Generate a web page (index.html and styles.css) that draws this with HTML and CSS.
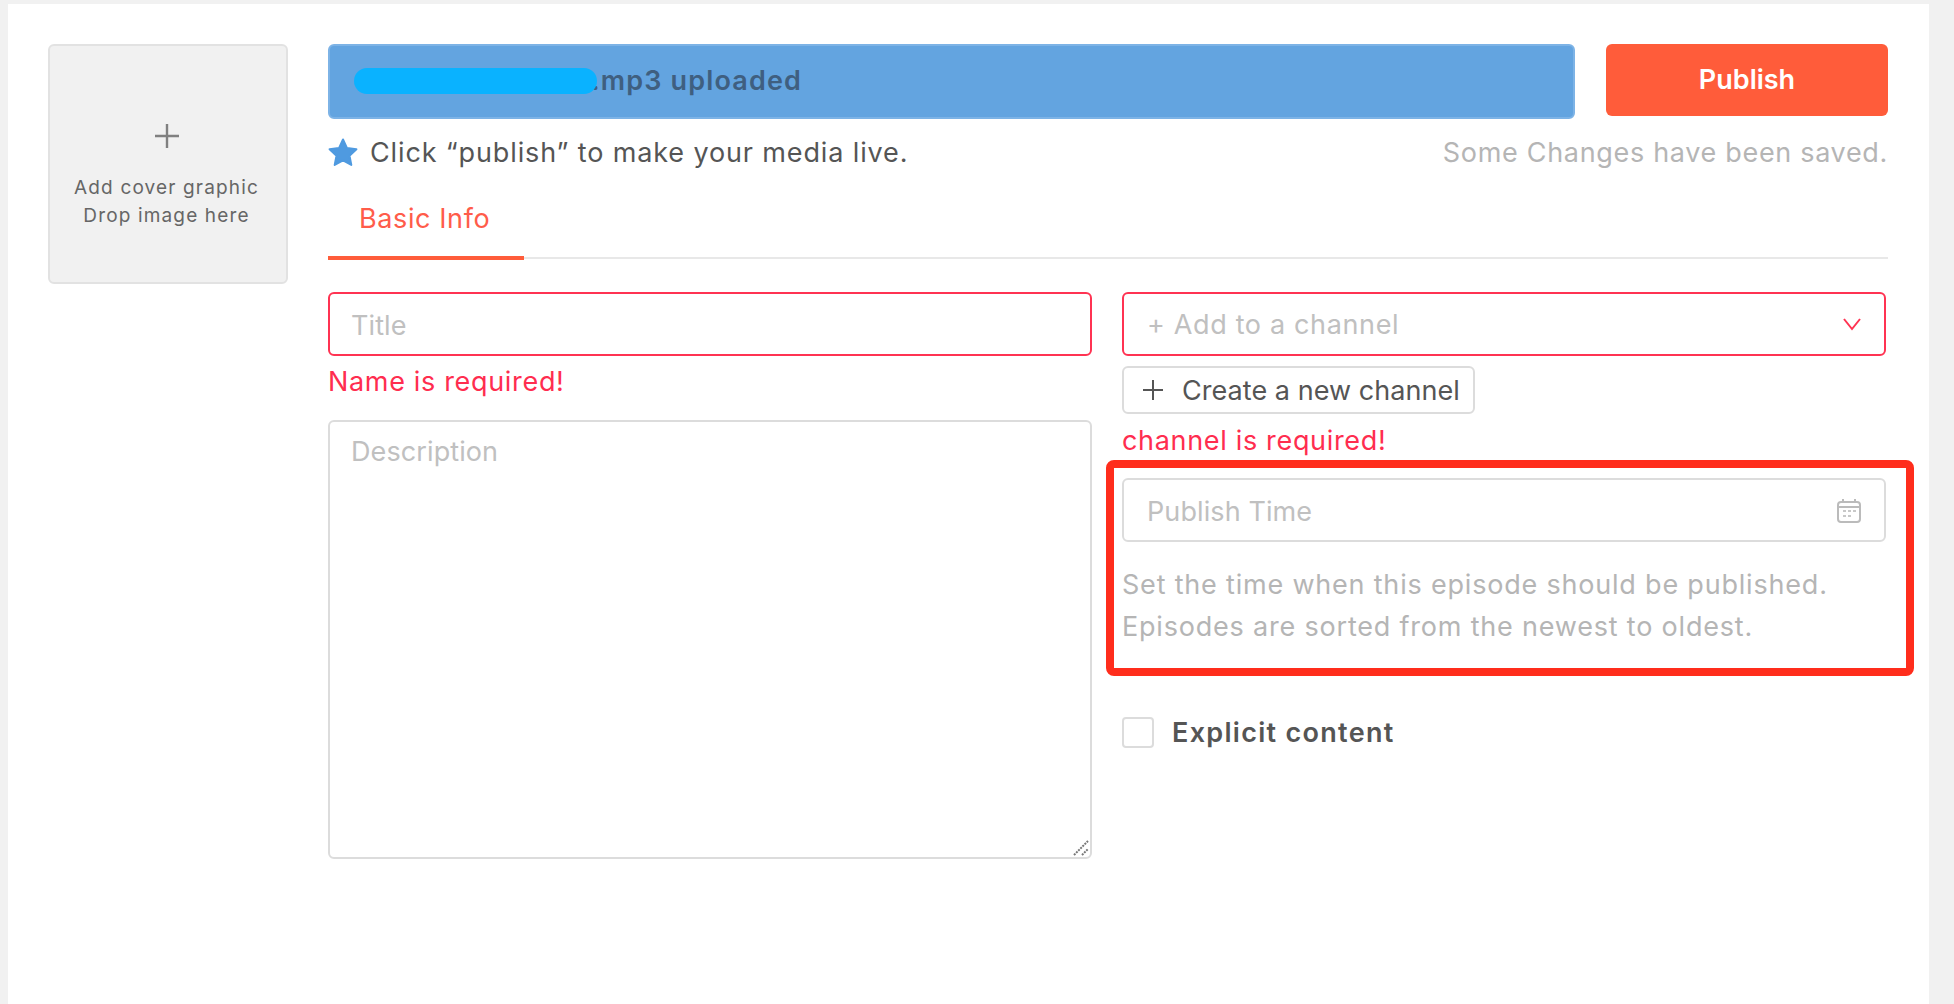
FILE: index.html
```html
<!DOCTYPE html>
<html lang="en">
<head>
<meta charset="utf-8">
<title>Publish episode</title>
<link rel="stylesheet" href="styles.css">
</head>
<body>
<main class="panel">
  <aside class="cover">
    <svg class="cover-plus" width="26" height="26" viewBox="0 0 26 26"><path d="M13 1v24M1 13h24" stroke="#808080" stroke-width="2.4" fill="none"/></svg>
    <p class="cover-text">Add cover graphic</p>
    <p class="cover-text">Drop image here</p>
  </aside>
  <section class="main">
    <div class="top-row">
      <div class="upload-bar"><span class="redact"></span><span class="upload-name">.mp3 uploaded</span></div>
      <button class="publish">Publish</button>
    </div>
    <div class="hint-row">
      <div class="hint">
        <svg class="star" width="30" height="28" viewBox="0 0 30 28"><path d="M15 1.5l4 8.6 9.4 1.2-6.9 6.5 1.8 9.2-8.3-4.6-8.3 4.6 1.8-9.2-6.9-6.5 9.4-1.2z" fill="#4f9ae0" stroke="#4f9ae0" stroke-width="2" stroke-linejoin="round"/></svg>
        <span>Click “publish” to make your media live.</span>
      </div>
      <span class="saved">Some Changes have been saved.</span>
    </div>
    <nav class="tabs"><span class="tab">Basic Info</span></nav>
    <div class="columns">
      <div class="col-left">
        <div class="field field-error field-low"><span class="placeholder">Title</span></div>
        <p class="error error-name">Name is required!</p>
        <div class="textarea">
          <span class="placeholder">Description</span>
          <svg class="grip" width="16" height="16" viewBox="0 0 16 16"><path d="M1 15L15 1M9 15l6-6" stroke="#777" stroke-width="2" stroke-dasharray="2 1" fill="none"/></svg>
        </div>
      </div>
      <div class="col-right">
        <div class="field field-error field-select">
          <span class="placeholder placeholder-wide">+ Add to a channel</span>
          <svg width="20" height="14" viewBox="0 0 20 14"><path d="M2 2l8 10 8-10" stroke="#ff3352" stroke-width="2" fill="none"/></svg>
        </div>
        <button class="create">
          <svg width="24" height="24" viewBox="0 0 24 24"><path d="M12 2v20M2 12h20" stroke="#555" stroke-width="2" fill="none"/></svg>
          <span>Create a new channel</span>
        </button>
        <p class="error error-channel">channel is required!</p>
        <div class="time-block">
          <div class="annotation"></div>
          <div class="field field-select field-low">
            <span class="placeholder">Publish Time</span>
            <svg class="calendar" width="26" height="26" viewBox="0 0 26 26">
              <rect x="2" y="4" width="22" height="20" rx="3" fill="none" stroke="#bbb" stroke-width="2"/>
              <path d="M2 9h22M7 1v4M19 1v4" stroke="#bbb" stroke-width="2" fill="none"/>
              <path d="M7 13h3M12 13h3M17 13h3M7 18h3M12 18h3" stroke="#c8c8c8" stroke-width="2" fill="none"/>
            </svg>
          </div>
          <p class="help">Set the time when this episode should be published.<br>Episodes are sorted from the newest to oldest.</p>
        </div>
        <label class="explicit"><span class="checkbox"></span><span>Explicit content</span></label>
      </div>
    </div>
  </section>
</main>
</body>
</html>
```
FILE: styles.css
```css
* { box-sizing: border-box; }
html, body { height: 100%; }
body {
  margin: 0;
  padding: 4px 25px 0 8px;
  background: #f1f1f1;
  font-family: Inter, "Noto Sans", sans-serif;
  color: #555;
  overflow: hidden;
}
p { margin: 0; }
.panel {
  display: flex;
  align-items: flex-start;
  gap: 40px;
  height: 1000px;
  padding: 40px 41px 0 40px;
  background: #fff;
}
.cover {
  flex: none;
  width: 240px;
  height: 240px;
  display: flex;
  flex-direction: column;
  align-items: center;
  padding: 77px 3px 0 0;
  background: #f1f1f1;
  border: 2px solid #e2e2e2;
  border-radius: 6px;
  color: #666;
}
.cover-plus { margin-bottom: 25px; }
.cover-text { font-size: 19px; line-height: 28px; letter-spacing: 1.15px; white-space: nowrap; }
.main { flex: 1; min-width: 0; }
.top-row { display: flex; align-items: flex-start; gap: 31px; }
.upload-bar {
  flex: 1;
  height: 75px;
  display: flex;
  align-items: center;
  padding: 0 0 2px 24px;
  background: #63a4e0;
  border: 2px solid #7db3e6;
  border-radius: 6px;
  font-size: 27px;
  font-weight: 600;
  letter-spacing: 1.15px;
  color: #3f5f80;
}
.redact { width: 243px; height: 26px; margin-right: -6px; border-radius: 13px; background: #0ab2ff; position: relative; }
.publish {
  flex: none;
  width: 282px;
  height: 72px;
  padding: 0 0 2px;
  border: 0;
  border-radius: 6px;
  background: #ff5c3a;
  color: #fff;
  font: 600 27px Inter, sans-serif;
}
.hint-row {
  display: flex;
  justify-content: space-between;
  align-items: center;
  height: 40px;
  margin-top: 13px;
  font-size: 27px;
}
.hint { display: flex; align-items: center; gap: 12px; letter-spacing: .87px; }
.star { flex: none; }
.saved { color: #b5b5b5; letter-spacing: .68px; }
.tabs { height: 87px; border-bottom: 2px solid #e8e8e8; }
.tab {
  display: block;
  width: 196px;
  height: 88px;
  padding: 30px 0 0 31px;
  border-bottom: 4px solid #ff5c3a;
  color: #ff5c4a;
  font-size: 27px;
  letter-spacing: .6px;
}
.columns { display: grid; grid-template-columns: 764px 764px; gap: 30px; margin-top: 33px; }
.field {
  height: 64px;
  display: flex;
  align-items: center;
  padding: 0 22px 0 23px;
  border: 2px solid #dcdcdc;
  border-radius: 6px;
  font-size: 27px;
}
.field-low { padding-top: 2px; }
.col-left .field { padding-left: 21px; }
.field-error { border-color: #ff3352; }
.field-select { justify-content: space-between; }
.placeholder { color: #c0c0c0; letter-spacing: .1px; }
.placeholder-wide { letter-spacing: .65px; }
.error { color: #ff2d4f; font-size: 27px; line-height: 40px; letter-spacing: .67px; }
.error-name { margin-top: 6px; }
.textarea {
  position: relative;
  height: 439px;
  margin-top: 18px;
  padding: 13px 22px 13px 21px;
  border: 2px solid #dcdcdc;
  border-radius: 6px;
  font-size: 27px;
}
.grip { position: absolute; right: 1px; bottom: 1px; }
.create {
  display: flex;
  align-items: center;
  gap: 17px;
  width: 353px;
  height: 48px;
  margin-top: 10px;
  padding: 0 0 0 17px;
  background: #fff;
  border: 2px solid #dcdcdc;
  border-radius: 6px;
  color: #555;
  font: 27px Inter, sans-serif;
  letter-spacing: .05px;
  white-space: nowrap;
}
.error-channel { margin-top: 7px; }
.time-block { position: relative; margin-top: 17px; height: 176px; }
.annotation {
  position: absolute;
  inset: -18px -28px -22px -16px;
  border: 8px solid #ff2d1c;
  border-radius: 8px;
  pointer-events: none;
}
.help { margin-top: 22px; color: #b5b5b5; font-size: 27px; line-height: 42px; letter-spacing: .8px; white-space: nowrap; }
.explicit {
  display: flex;
  align-items: center;
  gap: 18px;
  margin-top: 62px;
  font-size: 27px;
  font-weight: 600;
  letter-spacing: 1.3px;
}
.checkbox { width: 32px; height: 31px; border: 2px solid #dcdcdc; border-radius: 4px; }
```
